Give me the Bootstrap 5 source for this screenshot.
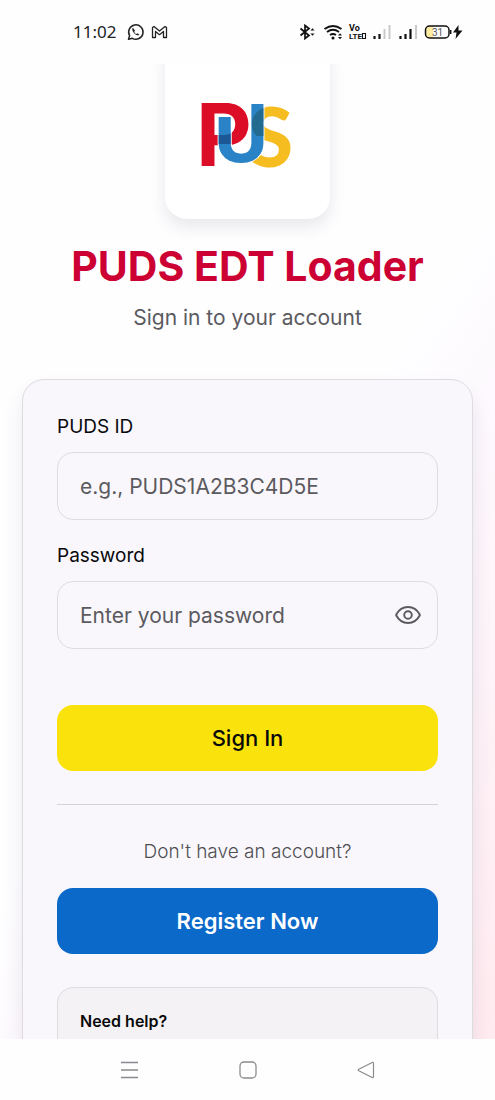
<!DOCTYPE html>
<html lang="en">
<head>
<meta charset="utf-8">
<meta name="viewport" content="width=device-width, initial-scale=1">
<title>PUDS EDT Loader</title>
<link href="https://cdn.jsdelivr.net/npm/bootstrap@5.3.0/dist/css/bootstrap.min.css" rel="stylesheet">
<style>
  body { font-family: Inter, "Liberation Sans", sans-serif; color: #09090b; background: #fefeff; }
  .status-bar { height: 64px; padding: 0 32px 0 73px; }
  .clock { font: 17px/24px "Noto Sans", sans-serif; color: #222; }
  .screen { min-height: 0; padding: 0 22px; background: linear-gradient(125deg, #fefeff 50%, #fdf9fe 62%, #ffebf0 100%); }
  .logo-tile { width: 165px; margin-top: -26px; padding-top: 16px; border-radius: 22px; background: #fff; box-shadow: 0 8px 16px rgba(40, 30, 60, .1); }
  .app-title { font-size: 41px; line-height: 48px; font-weight: 700; color: #cc0033; margin: 23px 0 12px; }
  .tagline { font-size: 21px; line-height: 32px; margin-bottom: 45px; }
  .muted { color: #5b5a5f; }
  .login-card { background: #f9f7fb; border: 1px solid #dddce0; border-radius: 22px; padding: 33px 34px; box-shadow: 0 12px 20px rgba(60, 30, 70, .1); }
  .field-label { display: block; font-size: 19px; line-height: 28px; margin-bottom: 11px; }
  .field { height: 68px; padding: 0 22px; font-size: 21px; border: 1px solid #dddce0; border-radius: 16px; background: transparent; }
  .field::placeholder { color: #5b5a5f; opacity: 1; }
  .field-gap { margin-bottom: 22px; }
  .field-secret { padding-right: 60px; }
  .eye { right: 17px; line-height: 0; color: #5b5a5f; }
  .action { height: 66px; font-size: 22px; border-radius: 16px; border: 0; }
  .action-yellow, .action-yellow:hover { background: #fae20c; color: #09090b; font-weight: 500; margin-top: 56px; }
  .action-blue, .action-blue:hover { background: #0b69c9; color: #fff; font-weight: 600; }
  .rule { margin: 33px 0; border-color: #d4d3d8; opacity: 1; }
  .prompt { font-size: 19px; line-height: 28px; font-weight: 300; color: #4f4e53; margin-bottom: 22px; }
  .help { margin-top: 33px; padding: 22px; border: 1px solid #dddce0; border-radius: 16px; background: #f4f2f5; }
  .help h2 { font-size: 16px; line-height: 22px; font-weight: 600; margin-bottom: 6px; }
  .nav-keys { height: 61px; gap: 94px; background: #fefeff; }
  .nav-keys button { width: 24px; height: 24px; line-height: 0; }
</style>
</head>
<body>
<div class="d-flex flex-column vh-100 overflow-hidden">
  <header class="status-bar d-flex align-items-center flex-shrink-0">
    <span class="clock">11:02</span>
    <svg class="ms-2" width="48" height="20" viewBox="0 0 48 20" fill="none" stroke="#222" aria-hidden="true">
      <path d="M4.500 17.300l1.100-3.700A7.200 7.200 0 1 1 8.300 16.300z" stroke-width="1.500" stroke-linejoin="round"/>
      <path d="M9 5.800c-1.500 1-.5 3.500 1.200 5.400s4 2.900 5.200 1.500l-2-1.500-1.100.8c-.9-.4-1.700-1.200-2.100-2.300l.8-.9z" fill="#222" stroke="none"/>
      <path d="M28.500 15.500V5.500l1.500-1 5.500 4.500L41 4.500l1.500 1v10h-3V9.500l-4 3.200-4-3.200v6z" stroke-width="1.300" stroke-linejoin="round"/>
    </svg>
    <svg class="ms-auto" width="164" height="20" viewBox="0 0 164 20" fill="none" stroke="#111" aria-hidden="true">
      <path d="M1.500 6.500l8.500 7-4 3V3.500l4 3-8.500 7" stroke-width="1.700"/>
      <path d="M11.500 8.500l2-2.200 2 2.200zM11.500 11.500l2 2.200 2-2.200z" fill="#111" stroke="none"/>
      <path d="M25.500 7q8.500-6 17 0M28 10q6-4.500 12 0M31 13q3-2 6 0" stroke-width="1.800"/>
      <circle cx="34" cy="16" r="1.500" fill="#111" stroke="none"/>
      <path d="M39 13.500l2-2.300 2 2.300zM39 15l2 2.300 2-2.300z" fill="#111" stroke="none"/>
      <g fill="#111" stroke="none" font-family="Roboto, sans-serif" font-weight="700" font-size="9">
        <text x="50" y="9">Vo</text><text x="50" y="17" font-size="8">LTE</text>
      </g>
      <path d="M63.500 11.500h3v5h-3z" stroke-width="1.100"/>
      <path d="M75.500 17v-3M80.500 17v-5M101.500 17v-3M106.500 17v-5M111.500 17V7" stroke-width="2.200"/>
      <path d="M85.500 17V7M90.500 17V3M117 17V3" stroke="#c9c9cc" stroke-width="2"/>
      <rect x="127" y="4" width="23" height="12" rx="4" fill="#fff" stroke="none"/>
      <path d="M134 4h-3a4 4 0 0 0-4 4v4a4 4 0 0 0 4 4h3z" fill="#ffeca3" stroke="none"/>
      <rect x="126.500" y="4" width="23.500" height="12" rx="4" stroke-width="1.500"/>
      <path d="M151.700 8v4" stroke-width="1.500"/>
      <text x="133" y="13.500" fill="#555" stroke="none" font-family="Roboto, sans-serif" font-size="10">31</text>
      <path d="M159.500 3l-5.500 7.500h3.500l-1 6.500 7-8.500h-4z" fill="#111" stroke="none"/>
    </svg>
  </header>

  <main class="screen flex-fill overflow-hidden">
    <div class="logo-tile mx-auto">
      <svg class="d-block" width="165" height="165" viewBox="0 0 165 165" role="img" aria-label="PUS" font-weight="700">
        <defs>
          <clipPath id="in-p"><text x="31" y="112" font-family="Inter, sans-serif" font-size="86">P</text></clipPath>
          <clipPath id="in-s"><text x="83" y="113" font-family="Lato, sans-serif" font-size="82" font-weight="900">S</text></clipPath>
          <clipPath id="in-u"><text x="49" y="108" font-family="Roboto, sans-serif" font-size="82">U</text></clipPath>
          <clipPath id="u-arms"><path d="M48 63h25V40h42v80H48z"/></clipPath>
        </defs>
        <text x="31" y="112" font-family="Inter, sans-serif" font-size="86" fill="#dc0d26">P</text>
        <text x="83" y="113" font-family="Lato, sans-serif" font-size="82" font-weight="900" fill="#f6bd20">S</text>
        <g clip-path="url(#u-arms)">
          <text x="49" y="108" font-family="Roboto, sans-serif" font-size="82" fill="#2983c6" stroke="#fff" stroke-width="2" paint-order="stroke">U</text>
          <g clip-path="url(#in-u)">
            <rect x="50" y="76" width="24" height="14" fill="#1c5896" clip-path="url(#in-p)"/>
            <rect x="84" y="40" width="22" height="42" fill="#226a90" clip-path="url(#in-s)"/>
          </g>
        </g>
      </svg>
    </div>
    <h1 class="app-title text-center">PUDS EDT Loader</h1>
    <p class="tagline muted text-center">Sign in to your account</p>

    <form class="login-card">
      <label class="field-label" for="puds-id">PUDS ID</label>
      <input class="form-control field field-gap" id="puds-id" type="text" placeholder="e.g., PUDS1A2B3C4D5E">
      <label class="field-label" for="password">Password</label>
      <div class="position-relative">
        <input class="form-control field field-secret" id="password" type="password" placeholder="Enter your password">
        <button class="eye btn p-0 border-0 position-absolute top-50 translate-middle-y" type="button" aria-label="Show password">
          <svg width="26" height="26" viewBox="0 0 24 24" fill="none" stroke="currentColor" stroke-width="1.800" stroke-linecap="round" stroke-linejoin="round"><path d="M1.200 12.500q-.3-.5 0-1C6 2.300 18 2.300 22.800 11.500q.3.500 0 1C18 21.700 6 21.700 1.200 12.500z"/><circle cx="12" cy="12" r="3.500"/></svg>
        </button>
      </div>
      <button class="btn action action-yellow w-100" type="submit">Sign In</button>
      <hr class="rule">
      <p class="prompt text-center">Don't have an account?</p>
      <button class="btn action action-blue w-100" type="button">Register Now</button>
      <section class="help">
        <h2>Need help?</h2>
      </section>
    </form>
  </main>

  <nav class="nav-keys d-flex justify-content-center align-items-center flex-shrink-0" aria-label="System">
    <button class="btn p-0 border-0" type="button" aria-label="Recent apps"><svg width="24" height="24" viewBox="0 0 24 24" fill="none" stroke="#8b8a8e" stroke-width="1.300"><path d="M3 4.500h17M3 12h17M3 19.500h17"/></svg></button>
    <button class="btn p-0 border-0" type="button" aria-label="Home"><svg width="24" height="24" viewBox="0 0 24 24" fill="none" stroke="#8b8a8e" stroke-width="1.300"><rect x="4" y="4" width="16" height="16" rx="4"/></svg></button>
    <button class="btn p-0 border-0" type="button" aria-label="Back"><svg width="24" height="24" viewBox="0 0 24 24" fill="none" stroke="#8b8a8e" stroke-width="1.200" stroke-linejoin="round"><path d="M18.200 4.500L4.800 11.200q-1.200.8 0 1.600l13.400 6.700q1.300.4 1.300-1V5.500q0-1.400-1.300-1z"/></svg></button>
  </nav>
</div>
<script src="https://cdn.jsdelivr.net/npm/bootstrap@5.3.0/dist/js/bootstrap.bundle.min.js"></script>
</body>
</html>
